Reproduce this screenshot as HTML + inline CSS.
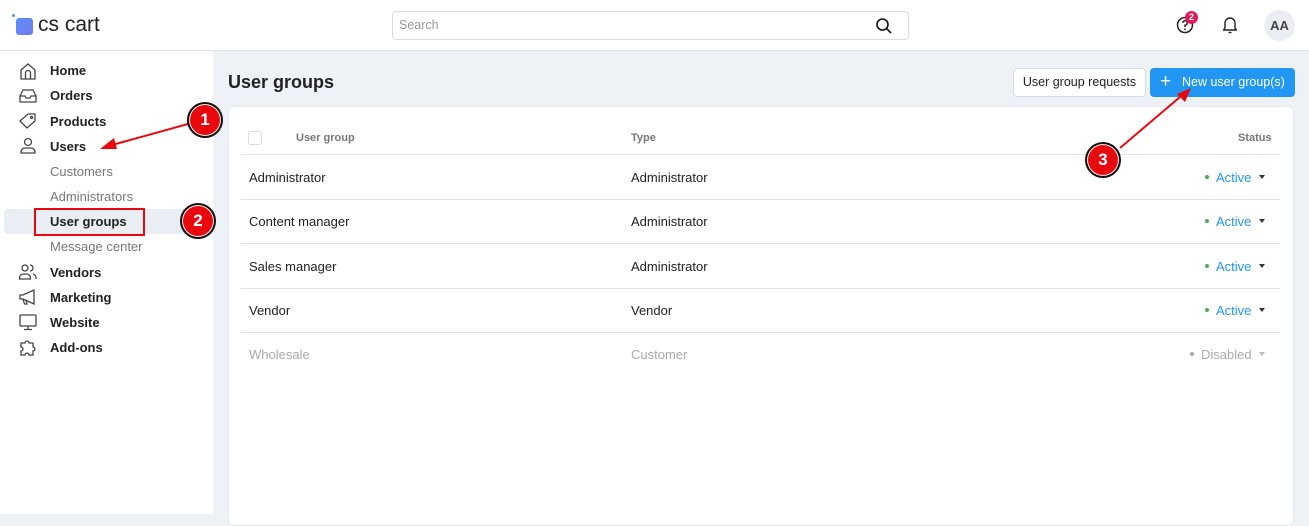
<!DOCTYPE html>
<html><head><meta charset="utf-8"><style>
*{box-sizing:border-box;margin:0;padding:0}
body{width:1309px;height:514px;overflow:hidden;font-family:"Liberation Sans",sans-serif;background:#eef2f7;position:relative;color:#222}
.top{position:absolute;left:0;top:0;width:1309px;height:51px;background:#fff;border-bottom:1px solid #dde3ec}
.side{position:absolute;left:0;top:51px;width:213px;height:463px;background:#fff}
.nav{position:absolute;left:50px;font-size:13px;font-weight:bold;color:#222}
.sub{position:absolute;left:50px;font-size:13px;color:#777}
.ic{position:absolute;left:18px;width:20px;height:20px}
.card{position:absolute;left:228px;top:106px;width:1066px;height:420px;background:#fff;border-radius:5px;border:1px solid #e3e8ef}
.row{position:absolute;left:241px;width:1039px;border-top:1px solid #dde2ec;height:44px}
.t{position:absolute;font-size:13px;color:#222}
.st{position:absolute;font-size:13px;color:#2196f3}
.dot{position:absolute;width:4px;height:4px;border-radius:2px;background:#4caf50}
.car{position:absolute;width:0;height:0;border-left:3.5px solid transparent;border-right:3.5px solid transparent;border-top:4px solid #333}
.circ{position:absolute;width:36px;height:36px;border-radius:18px;background:#e8090f;border:2px solid #111;box-shadow:0 0 0 1px #fff inset;color:#fff;font-weight:bold;font-size:17px;text-align:center;line-height:32px}
</style></head><body>
<div class="top">
  <div style="position:absolute;left:12px;top:14px;width:3px;height:3px;border-radius:2px;background:#5b8cff"></div>
  <div style="position:absolute;left:16px;top:18px;width:17px;height:17px;border-radius:3px;background:linear-gradient(135deg,#5f8df8,#6d7cf0)"></div>
  <div style="position:absolute;left:38px;top:13px;font-size:21px;color:#222;letter-spacing:0px">cs cart</div>
  <div style="position:absolute;left:392px;top:11px;width:517px;height:29px;border:1px solid #d6dbe4;border-radius:4px">
    <span style="position:absolute;left:6px;top:6px;font-size:12.5px;color:#999">Search</span>
    <svg style="position:absolute;right:15px;top:5px" width="18" height="18" viewBox="0 0 18 18"><circle cx="7.5" cy="7.5" r="5.5" fill="none" stroke="#111" stroke-width="1.6"/><path d="M11.5 11.5L16 16" stroke="#111" stroke-width="1.6"/></svg>
  </div>
  <svg style="position:absolute;left:1176px;top:16px" width="18" height="18" viewBox="0 0 18 18"><circle cx="9" cy="9" r="7.5" fill="none" stroke="#222" stroke-width="1.5"/><path d="M6.8 7a2.2 2.2 0 1 1 2.2 2.2V11" fill="none" stroke="#222" stroke-width="1.5"/><circle cx="9" cy="13.3" r=".9" fill="#222"/></svg>
  <div style="position:absolute;left:1185px;top:11px;width:13px;height:13px;border-radius:7px;background:#e0185c;color:#fff;font-size:9px;font-weight:bold;text-align:center;line-height:13px">2</div>
  <svg style="position:absolute;left:1221px;top:15px" width="18" height="20" viewBox="0 0 18 20"><path d="M4 13V8a5 5 0 0 1 10 0v5l1.5 2h-13z" fill="none" stroke="#222" stroke-width="1.4" stroke-linejoin="round"/><path d="M7.5 17.5h3" stroke="#222" stroke-width="1.4"/></svg>
  <div style="position:absolute;left:1264px;top:10px;width:31px;height:31px;border-radius:16px;background:#eaeef4;color:#444;font-size:13px;font-weight:bold;text-align:center;line-height:31px">AA</div>
</div>
<div class="side">
  <svg class="ic" style="top:10px" viewBox="0 0 20 20" fill="none" stroke="#444" stroke-width="1.3"><path d="M3 9l7-6 7 6v9H3z M7.5 18v-6a2.5 2.5 0 0 1 5 0v6"/></svg>
  <svg class="ic" style="top:35px" viewBox="0 0 20 20" fill="none" stroke="#444" stroke-width="1.3"><path d="M2 10l3-6h10l3 6v6H2z M2 10h5l1 2h4l1-2h5"/></svg>
  <svg class="ic" style="top:60px" viewBox="0 0 20 20" fill="none" stroke="#444" stroke-width="1.3"><path d="M2 10l8-7h7v7l-8 7z"/><circle cx="13.5" cy="6.5" r="1"/></svg>
  <svg class="ic" style="top:85px" viewBox="0 0 20 20" fill="none" stroke="#444" stroke-width="1.3"><circle cx="10" cy="6" r="3.5"/><path d="M3 17v-1a4 4 0 0 1 4-4h6a4 4 0 0 1 4 4v1z"/></svg>
  <svg class="ic" style="top:211px" viewBox="0 0 20 20" fill="none" stroke="#444" stroke-width="1.3"><circle cx="7" cy="6" r="3"/><path d="M1.5 17v-1a4 4 0 0 1 4-4h3a4 4 0 0 1 4 4v1z M12 3a3 3 0 0 1 0 6 M15 12a4 4 0 0 1 3 4v1"/></svg>
  <svg class="ic" style="top:236px" viewBox="0 0 20 20" fill="none" stroke="#444" stroke-width="1.3"><path d="M2 8v4h3l11 5V3L5 8z M5 12l1.5 5h2.5L8 12.5"/></svg>
  <svg class="ic" style="top:261px" viewBox="0 0 20 20" fill="none" stroke="#444" stroke-width="1.3"><rect x="2" y="3" width="16" height="11" rx="1"/><path d="M10 14v3 M6 17.5h8"/></svg>
  <svg class="ic" style="top:286px" viewBox="0 0 20 20" fill="none" stroke="#444" stroke-width="1.3"><path d="M3 6h4a2 2 0 1 1 4 0h4v4a2 2 0 1 1 0 4v4h-4a2 2 0 1 0-4 0H3v-4a2 2 0 1 0 0-4z"/></svg>
  <div class="nav" style="top:12px">Home</div>
  <div class="nav" style="top:37px">Orders</div>
  <div class="nav" style="top:63px">Products</div>
  <div class="nav" style="top:88px">Users</div>
  <div class="sub" style="top:113px">Customers</div>
  <div class="sub" style="top:138px">Administrators</div>
  <div style="position:absolute;left:4px;top:158px;width:209px;height:25px;background:#e9eef5;border-radius:4px 0 0 4px"></div>
  <div style="position:absolute;left:34px;top:157px;width:111px;height:28px;border:2px solid #e8090f"></div>
  <div class="nav" style="top:163px">User groups</div>
  <div class="sub" style="top:188px">Message center</div>
  <div class="nav" style="top:214px">Vendors</div>
  <div class="nav" style="top:239px">Marketing</div>
  <div class="nav" style="top:264px">Website</div>
  <div class="nav" style="top:289px">Add-ons</div>
</div>
<div style="position:absolute;left:228px;top:72px;font-size:18px;font-weight:bold;color:#222">User groups</div>
<div style="position:absolute;left:1013px;top:68px;width:133px;height:29px;background:#fff;border:1px solid #d6dbe4;border-radius:4px;font-size:12.5px;color:#222;text-align:center;line-height:27px">User group requests</div>
<div style="position:absolute;left:1150px;top:68px;width:145px;height:29px;background:#2196f3;border-radius:4px;font-size:12.5px;color:#fff;line-height:29px"><span style="position:absolute;left:10px;top:-1px;font-size:19px">+</span><span style="position:absolute;left:32px">New user group(s)</span></div>
<div class="card"></div>
<div style="position:absolute;left:248px;top:131px;width:14px;height:14px;border:1px solid #d6dbe4;border-radius:3px"></div>
<div class="t" style="left:296px;top:132px;font-size:11px;font-weight:bold;color:#777">User group</div>
<div class="t" style="left:631px;top:132px;font-size:11px;font-weight:bold;color:#777">Type</div>
<div class="t" style="left:1238px;top:132px;font-size:11px;font-weight:bold;color:#777">Status</div>
<div class="row" style="top:154px"></div>
<div class="row" style="top:199px"></div>
<div class="row" style="top:243px"></div>
<div class="row" style="top:288px"></div>
<div class="row" style="top:332px;height:1px"></div>
<div class="t" style="left:249px;top:170px">Administrator</div><div class="t" style="left:631px;top:170px">Administrator</div>
<div class="t" style="left:249px;top:214px">Content manager</div><div class="t" style="left:631px;top:214px">Administrator</div>
<div class="t" style="left:249px;top:259px">Sales manager</div><div class="t" style="left:631px;top:259px">Administrator</div>
<div class="t" style="left:249px;top:303px">Vendor</div><div class="t" style="left:631px;top:303px">Vendor</div>
<div class="t" style="left:249px;top:347px;color:#aaa">Wholesale</div><div class="t" style="left:631px;top:347px;color:#aaa">Customer</div>
<div class="dot" style="left:1205px;top:175px"></div><div class="st" style="left:1216px;top:170px">Active</div><div class="car" style="left:1259px;top:175px"></div>
<div class="dot" style="left:1205px;top:219px"></div><div class="st" style="left:1216px;top:214px">Active</div><div class="car" style="left:1259px;top:219px"></div>
<div class="dot" style="left:1205px;top:264px"></div><div class="st" style="left:1216px;top:259px">Active</div><div class="car" style="left:1259px;top:264px"></div>
<div class="dot" style="left:1205px;top:308px"></div><div class="st" style="left:1216px;top:303px">Active</div><div class="car" style="left:1259px;top:308px"></div>
<div class="dot" style="left:1190px;top:352px;background:#aaa"></div><div class="st" style="left:1201px;top:347px;color:#aaa">Disabled</div><div class="car" style="left:1259px;top:352px;border-top-color:#bbb"></div>
<svg style="position:absolute;left:0;top:0" width="1309" height="514">
<path d="M188 124L112 145" stroke="#e8090f" stroke-width="2"/><path d="M100 149l14-11 3 11z" fill="#e8090f"/>
<path d="M1120 148L1180 97" stroke="#e8090f" stroke-width="2"/><path d="M1191 88l-6 14-8-8z" fill="#e8090f"/>
</svg>
<div class="circ" style="left:187px;top:102px">1</div>
<div class="circ" style="left:180px;top:203px">2</div>
<div class="circ" style="left:1085px;top:142px">3</div>
</body></html>
